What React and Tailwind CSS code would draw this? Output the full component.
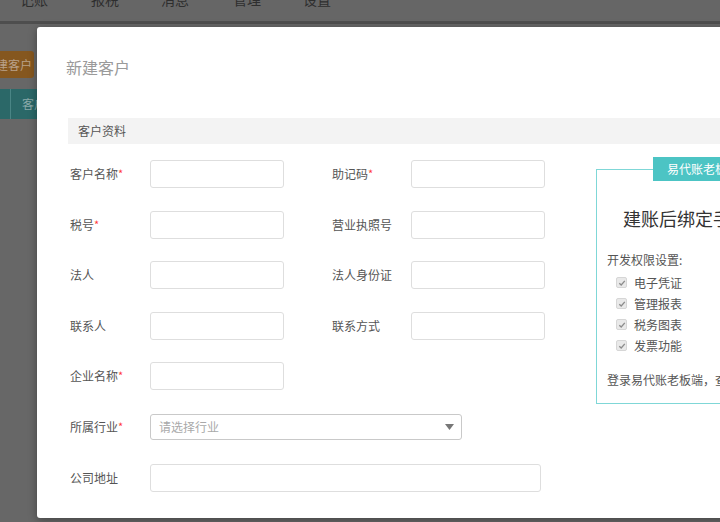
import React from "react";

const font = { fontFamily: '"Noto Sans CJK SC", "Noto Sans", sans-serif' };

function Star() {
  return <span className="text-[#ff3b3b] text-[11px] relative top-[-1px]">*</span>;
}

function Input({ w = "w-[134px]" }) {
  return <div className={`${w} h-[28px] border border-[#dedede] rounded-[3px] bg-white`} />;
}

function Label({ text, req, w = "w-[80px]" }) {
  return (
    <div className={`${w} shrink-0 text-[12px] text-[#555] leading-none`}>
      {text}
      {req && <Star />}
    </div>
  );
}

function Check({ text }) {
  return (
    <div className="flex items-center h-[21px] pl-[19px]">
      <div className="w-[11px] h-[11px] rounded-[2px] bg-[#e9e9e9] border border-[#d6d6d6] flex items-center justify-center">
        <svg width="8" height="8" viewBox="0 0 8 8">
          <path d="M1.3 4.2 L3.2 6 L6.8 1.8" fill="none" stroke="#8c8c8c" strokeWidth="1.3" />
        </svg>
      </div>
      <span className="ml-[7px] text-[12px] text-[#555]">{text}</span>
    </div>
  );
}

export default function App() {
  return (
    <div className="relative w-[720px] h-[522px] overflow-hidden bg-[#676767]" style={font}>
      {/* Background page under overlay */}
      <div className="h-[24px] bg-[#666666] border-b-[3px] border-[#4e4e4e] relative overflow-hidden">
        <div className="flex text-[14px] text-[#2e2e2e] leading-none absolute top-[-8px] left-[20px]">
          <span className="w-[71px]">记账</span>
          <span className="w-[70px]">报税</span>
          <span className="w-[72px]">消息</span>
          <span className="w-[70px]">管理</span>
          <span>设置</span>
        </div>
      </div>
      <div className="pt-[27px]">
        <div className="w-[34px] h-[27px] bg-[#85571f] rounded-r-[3px] flex items-center justify-end pr-[2px] text-[12px] text-[#b9a189] overflow-hidden whitespace-nowrap">
          建客户
        </div>
        <div className="mt-[11px] h-[30px] bg-[#2b6868] flex items-center">
          <div className="w-[11px] h-full border-r border-[#4a8585]" />
          <span className="ml-[11px] text-[12px] text-[#8aa9a9] whitespace-nowrap">客户</span>
        </div>
      </div>

      {/* Modal */}
      <div className="absolute left-[37px] top-[27px] w-[720px] h-[491px] bg-white rounded-[3px] shadow-[0_2px_8px_rgba(0,0,0,0.35)]">
        <div className="pl-[29px] pt-[30px] text-[16px] leading-[20px] text-[#9a9a9a]">新建客户</div>
        <div className="ml-[31px] mt-[41px]">
          <div className="h-[26px] bg-[#f3f3f3] flex items-center pl-[10px] text-[12px] text-[#555]">客户资料</div>
          <div className="flex">
            <div className="w-[528px] shrink-0 pt-[16px] flex flex-col gap-[22.6px] pl-[2px]">
              <div className="flex items-center h-[28px]">
                <Label text="客户名称" req />
                <Input />
                <div className="w-[48px]" />
                <Label text="助记码" req w="w-[79px]" />
                <Input />
              </div>
              <div className="flex items-center h-[28px]">
                <Label text="税号" req />
                <Input />
                <div className="w-[48px]" />
                <Label text="营业执照号" w="w-[79px]" />
                <Input />
              </div>
              <div className="flex items-center h-[28px]">
                <Label text="法人" />
                <Input />
                <div className="w-[48px]" />
                <Label text="法人身份证" w="w-[79px]" />
                <Input />
              </div>
              <div className="flex items-center h-[28px]">
                <Label text="联系人" />
                <Input />
                <div className="w-[48px]" />
                <Label text="联系方式" w="w-[79px]" />
                <Input />
              </div>
              <div className="flex items-center h-[28px]">
                <Label text="企业名称" req />
                <Input />
              </div>
              <div className="flex items-center h-[28px]">
                <Label text="所属行业" req />
                <div className="w-[312px] h-[26px] border border-[#c9c9c9] rounded-[3px] flex items-center justify-between pl-[8px] pr-[7px]">
                  <span className="text-[12px] text-[#a9a9a9]">请选择行业</span>
                  <svg width="9" height="6" viewBox="0 0 9 6">
                    <path d="M0 0 H9 L4.5 6 Z" fill="#777" />
                  </svg>
                </div>
              </div>
              <div className="flex items-center h-[28px]">
                <Label text="公司地址" />
                <Input w="w-[391px]" />
              </div>
            </div>
            <div className="mt-[25px] w-[200px] h-[235px] border border-[#7fd7d7] relative shrink-0">
              <div className="absolute left-[56px] top-[-13px] h-[24px] w-[120px] bg-[#4cc4c4] text-white text-[12px] flex items-center pl-[14px] whitespace-nowrap">
                易代账老板端
              </div>
              <div className="pl-[26px] pt-[36px] text-[18px] leading-[24px] text-[#333] whitespace-nowrap">建账后绑定手机号</div>
              <div className="pl-[10px] pt-[22px] text-[12px] text-[#555] leading-[16px]">开发权限设置:</div>
              <div className="pt-[4px]">
                <Check text="电子凭证" />
                <Check text="管理报表" />
                <Check text="税务图表" />
                <Check text="发票功能" />
              </div>
              <div className="pl-[10px] pt-[15px] text-[12px] text-[#555] whitespace-nowrap">登录易代账老板端，查看</div>
            </div>
          </div>
        </div>
      </div>
    </div>
  );
}
